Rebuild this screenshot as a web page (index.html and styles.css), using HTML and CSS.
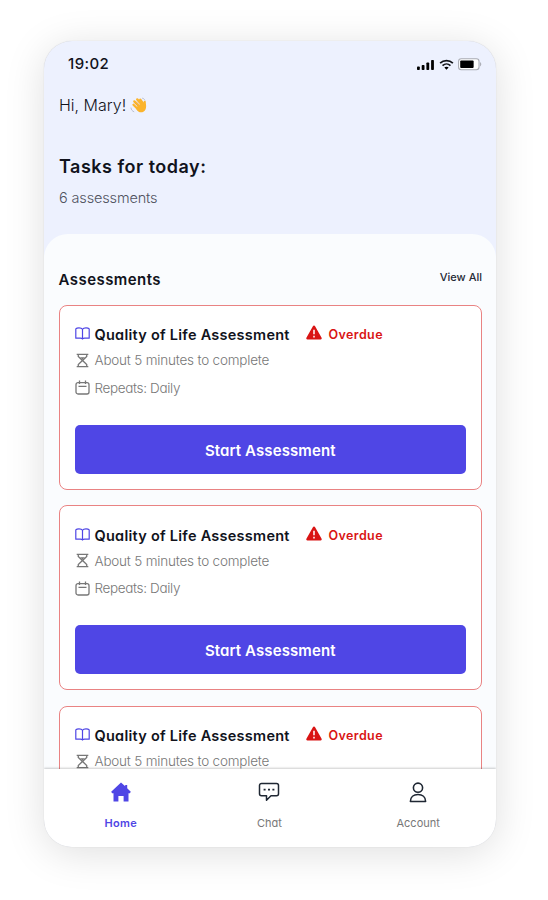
FILE: index.html
```
<!DOCTYPE html>
<html lang="en">
<head>
    <meta charset="UTF-8">
    <meta name="viewport" content="width=device-width, initial-scale=1.0">
    <title>Assessments</title>
    <link rel="stylesheet" href="styles.css">
</head>
<body>

    <!-- Shared icons -->
    <svg class="sprite" xmlns="http://www.w3.org/2000/svg">
        <symbol id="book" viewBox="0 0 15 13">
            <path d="M7.500 2.300C6.800 1.100 5.500.8 4 .8S1.500 1 .8 1.800v9.400h4.500c1 0 1.800.2 2.200.8.400-.6 1.200-.8 2.200-.8h4.500V1.800C13.500 1 12.500.8 11 .8S8.200 1.100 7.500 2.300zM7.500 2.300v9.200" fill="none" stroke="currentColor" stroke-width="1.200" stroke-linejoin="round" />
        </symbol>
        <symbol id="hourglass" viewBox="0 0 14 16">
            <path d="M.8 1.500h12.400M.8 14.500h12.400M2.500 1.500v2.300L7 8l4.500-4.200V1.500M2.500 14.500v-2.300L7 8l4.500 4.200v2.300" fill="none" stroke="currentColor" stroke-width="1.400" />
            <path d="M4.300 4.500h5.400L7 7z" fill="currentColor" />
        </symbol>
        <symbol id="calendar" viewBox="0 0 15 15">
            <rect x="1" y="2.700" width="13" height="11.300" rx="2" fill="none" stroke="currentColor" stroke-width="1.300" />
            <path d="M4.500.5v3.500M10.500.5v3.500M3.500 6.300h8" fill="none" stroke="currentColor" stroke-width="1.300" />
        </symbol>
        <symbol id="warning" viewBox="0 0 16 15">
            <path d="M8 .5c.5 0 .9.300 1.100.7l6.500 11.600c.4.800-.1 1.700-1 1.700H1.400c-.9 0-1.400-.9-1-1.700L6.900 1.200C7.100.8 7.500.5 8 .5z" fill="currentColor" />
            <path d="M8 4.800v4.400M8 10.800v1.700" stroke="#fff" stroke-width="1.500" />
        </symbol>
    </svg>

    <div class="phone">
        <header class="header">
            <div class="status">
                <span class="time">19:02</span>
                <div class="status-icons">
                    <svg width="18" height="11" viewBox="0 0 18 11">
                        <rect x="0" y="7.500" width="2.800" height="3.500" rx=".8" />
                        <rect x="4.700" y="6" width="2.800" height="5" rx=".8" />
                        <rect x="9.400" y="3.500" width="2.800" height="7.500" rx=".8" />
                        <rect x="14.100" y="1" width="2.800" height="10" rx=".8" />
                    </svg>
                    <svg width="15" height="11" viewBox="0 0 16 11">
                        <path d="M1.200 4C5 .4 11 .4 14.800 4M3.800 6.600c2.400-2.200 6-2.200 8.400 0" fill="none" stroke="#111318" stroke-width="1.800" />
                        <path d="M8 11L5.700 8.700c1.300-1.100 3.300-1.100 4.600 0z" />
                    </svg>
                    <svg width="24" height="13" viewBox="0 0 25 13">
                        <rect x=".6" y=".6" width="21.300" height="11.400" rx="2.800" fill="#fff" stroke="#a9abb3" stroke-width="1.100" />
                        <rect x="2.300" y="2.400" width="14" height="7.800" rx="1" />
                        <path d="M23 4v4.600c1.700-.8 1.700-3.800 0-4.600z" fill="#a9abb3" />
                    </svg>
                </div>
            </div>
            <div class="greeting">
                <span>Hi, Mary!</span>
                <svg width="17" height="17" viewBox="0 0 17 17">
                    <g fill="none" stroke-linecap="round">
                        <path d="M3.500 7.800l4.500 4.400M4.300 4.400l5.500 5.400M7.200 2.400l5 5.400M10.300 2.700l2.500 3.500" stroke="#fbb42c" stroke-width="2.300" />
                        <path d="M5 6.300l3.500 3.500M7.200 4.700l3.300 3.400" stroke="#e8912a" stroke-width=".5" />
                        <path d="M1 11c.2 1.800 1.200 3 2.800 3.700M12.500 1.200c1.100.2 1.900.9 2.300 1.800" stroke="#aeb4c4" stroke-width=".8" />
                    </g>
                    <path d="M6 10.500l6-4.800c.8 1 1.300.5 1.700-1.200.2-1.300 2.200-1 2.100.4-.1 2 .9 4.400-.1 7-1 2.800-4.400 4.400-7 2.900-1.300-.8-2.700-2.500-2.700-4.300z" fill="#fbb42c" />
                </svg>
            </div>
            <h1 class="tasks">Tasks for today:</h1>
            <p class="count">6 assessments</p>
        </header>

        <main class="sheet">
            <div class="sheet-head">
                <h2>Assessments</h2>
                <a class="view-all">View All</a>
            </div>

            <section class="card">
                <div class="card-title">
                    <svg class="icon book"><use href="#book" /></svg>
                    <h3>Quality of Life Assessment</h3>
                    <svg class="icon warning"><use href="#warning" /></svg>
                    <span class="overdue">Overdue</span>
                </div>
                <div class="meta"><svg class="icon"><use href="#hourglass" /></svg><span>About 5 minutes to complete</span></div>
                <div class="meta repeats"><svg class="icon"><use href="#calendar" /></svg><span>Repeats: Daily</span></div>
                <button class="start">Start Assessment</button>
            </section>

            <section class="card">
                <div class="card-title">
                    <svg class="icon book"><use href="#book" /></svg>
                    <h3>Quality of Life Assessment</h3>
                    <svg class="icon warning"><use href="#warning" /></svg>
                    <span class="overdue">Overdue</span>
                </div>
                <div class="meta"><svg class="icon"><use href="#hourglass" /></svg><span>About 5 minutes to complete</span></div>
                <div class="meta repeats"><svg class="icon"><use href="#calendar" /></svg><span>Repeats: Daily</span></div>
                <button class="start">Start Assessment</button>
            </section>

            <section class="card">
                <div class="card-title">
                    <svg class="icon book"><use href="#book" /></svg>
                    <h3>Quality of Life Assessment</h3>
                    <svg class="icon warning"><use href="#warning" /></svg>
                    <span class="overdue">Overdue</span>
                </div>
                <div class="meta"><svg class="icon"><use href="#hourglass" /></svg><span>About 5 minutes to complete</span></div>
            </section>
        </main>

        <nav class="tabs">
            <a class="tab active">
                <svg width="20" height="20" viewBox="0 0 20 20">
                    <path d="M10 .4L14.200 4.200V3h2v3.200l3.600 3.500-.9 1.600h-1.400v8.100h-4.900v-5.500H7.400v5.500H2.500v-8.100H1.100L.2 9.700z" fill="currentColor" />
                </svg>
                <span>Home</span>
            </a>
            <a class="tab">
                <svg width="22" height="20" viewBox="0 0 22 20">
                    <path d="M3.500 1.500h15a2 2 0 0 1 2 2v8.200a2 2 0 0 1-2 2h-5.500L8.500 18.200v-4.500h-5a2 2 0 0 1-2-2V3.500a2 2 0 0 1 2-2z" fill="none" stroke="#1f2733" stroke-width="1.500" stroke-linejoin="round" />
                    <path d="M5.600 7.600h2M10 7.600h2M14.400 7.600h2" stroke="#1f2733" stroke-width="1.700" />
                </svg>
                <span>Chat</span>
            </a>
            <a class="tab">
                <svg width="18" height="21" viewBox="0 0 18 21">
                    <circle cx="9" cy="5.700" r="4.600" fill="none" stroke="#1f2733" stroke-width="1.600" />
                    <path d="M1.400 19.500c0-4.500 3.200-7 7.600-7s7.600 2.500 7.600 7z" fill="none" stroke="#1f2733" stroke-width="1.600" stroke-linejoin="round" />
                </svg>
                <span>Account</span>
            </a>
        </nav>
    </div>

</body>
</html>
```
FILE: styles.css
```
* {
    box-sizing: border-box;
}

body {
    margin: 0;
    height: 900px;
    padding: 41px 52.5px 0 43.5px;
    background: #fff;
    color: #11131c;
    font-family: Inter, "Liberation Sans", sans-serif;
    overflow: hidden;
}

h1, h2, h3, p {
    margin: 0;
}

/* single-storey a */
h3, .meta, .start, .tab {
    font-feature-settings: "cv11";
}

.sprite {
    display: none;
}

.phone {
    display: flex;
    flex-direction: column;
    height: 806px;
    border-radius: 28px;
    overflow: hidden;
    background: #edf1fe;
    box-shadow: 0 0 1px rgba(0, 0, 0, 0.2), 0 6px 40px rgba(0, 0, 0, 0.13);
}

.header {
    height: 193px;
    padding: 13px 14px 0 15.5px;
}

.status {
    display: flex;
    justify-content: space-between;
    align-items: center;
    height: 19px;
    padding-left: 9px;
}

.time {
    font-size: 15px;
    font-weight: 500;
    letter-spacing: 0.4px;
}

.status-icons {
    display: flex;
    align-items: center;
    gap: 4px;
    padding-top: 2px;
}

.greeting {
    display: flex;
    align-items: center;
    gap: 4px;
    height: 20px;
    margin-top: 22px;
    font-size: 16px;
    font-weight: 300;
}

.tasks {
    margin-top: 40px;
    font-size: 18px;
    font-weight: 600;
    line-height: 24px;
    letter-spacing: 0.5px;
}

.count {
    margin-top: 9px;
    color: #50535e;
    font-size: 14.5px;
    font-weight: 300;
    line-height: 20px;
    letter-spacing: -0.15px;
}

.sheet {
    display: flex;
    flex-direction: column;
    gap: 15.5px;
    height: 535px;
    padding: 35px 13.5px 0 15px;
    border-radius: 24px 24px 0 0;
    background: #fafcfe;
    overflow: hidden;
}

.sheet-head {
    display: flex;
    justify-content: space-between;
    height: 20px;
}

.sheet-head h2 {
    font-size: 15px;
    font-weight: 600;
    line-height: 21px;
    letter-spacing: 0.45px;
}

.view-all {
    color: #262a36;
    font-size: 11px;
    font-weight: 500;
    line-height: 17px;
}

.card {
    flex: none;
    height: 185px;
    padding: 18px 15px 0;
    border: 1px solid #e98383;
    border-radius: 8px;
    background: #fff;
}

.card-title {
    display: flex;
    align-items: center;
    height: 22px;
    margin-bottom: 1px;
}

.icon {
    flex: none;
    width: 15px;
    height: 15px;
}

.book {
    height: 13px;
    margin-right: 5px;
    margin-top: -2px;
    color: #4f46e5;
}

.card-title h3 {
    width: 211px;
    font-size: 14.5px;
    font-weight: 600;
    white-space: nowrap;
    letter-spacing: 0.26px;
}

.warning {
    width: 16px;
    margin-right: 7px;
    margin-top: -4px;
    color: #d91414;
}

.overdue {
    color: #d91414;
    font-size: 12.5px;
    font-weight: 600;
    letter-spacing: 0.4px;
}

.meta {
    display: flex;
    align-items: center;
    gap: 5px;
    height: 27.5px;
    color: #777;
    font-size: 13.5px;
    font-weight: 300;
    letter-spacing: -0.2px;
}

.repeats {
    letter-spacing: -0.35px;
}

.start {
    display: block;
    width: 100%;
    height: 49px;
    margin-top: 23px;
    padding-top: 3px;
    border: none;
    border-radius: 5px;
    background: #4f46e5;
    color: #fff;
    font-family: inherit;
    font-size: 15px;
    font-weight: 600;
    letter-spacing: 0.1px;
}

.tabs {
    z-index: 1;
    display: grid;
    grid-template-columns: repeat(3, 1fr);
    height: 78px;
    padding: 13px 3px 0 3px;
    background: #fff;
    box-shadow: 0 -1px 2px rgba(0, 0, 0, 0.2);
}

.tab {
    display: flex;
    flex-direction: column;
    align-items: center;
    justify-content: space-between;
    height: 48px;
    color: #777;
    font-size: 11px;
    line-height: 14px;
}

.active {
    color: #4f46e5;
    font-weight: 600;
    letter-spacing: 0.3px;
}
```
